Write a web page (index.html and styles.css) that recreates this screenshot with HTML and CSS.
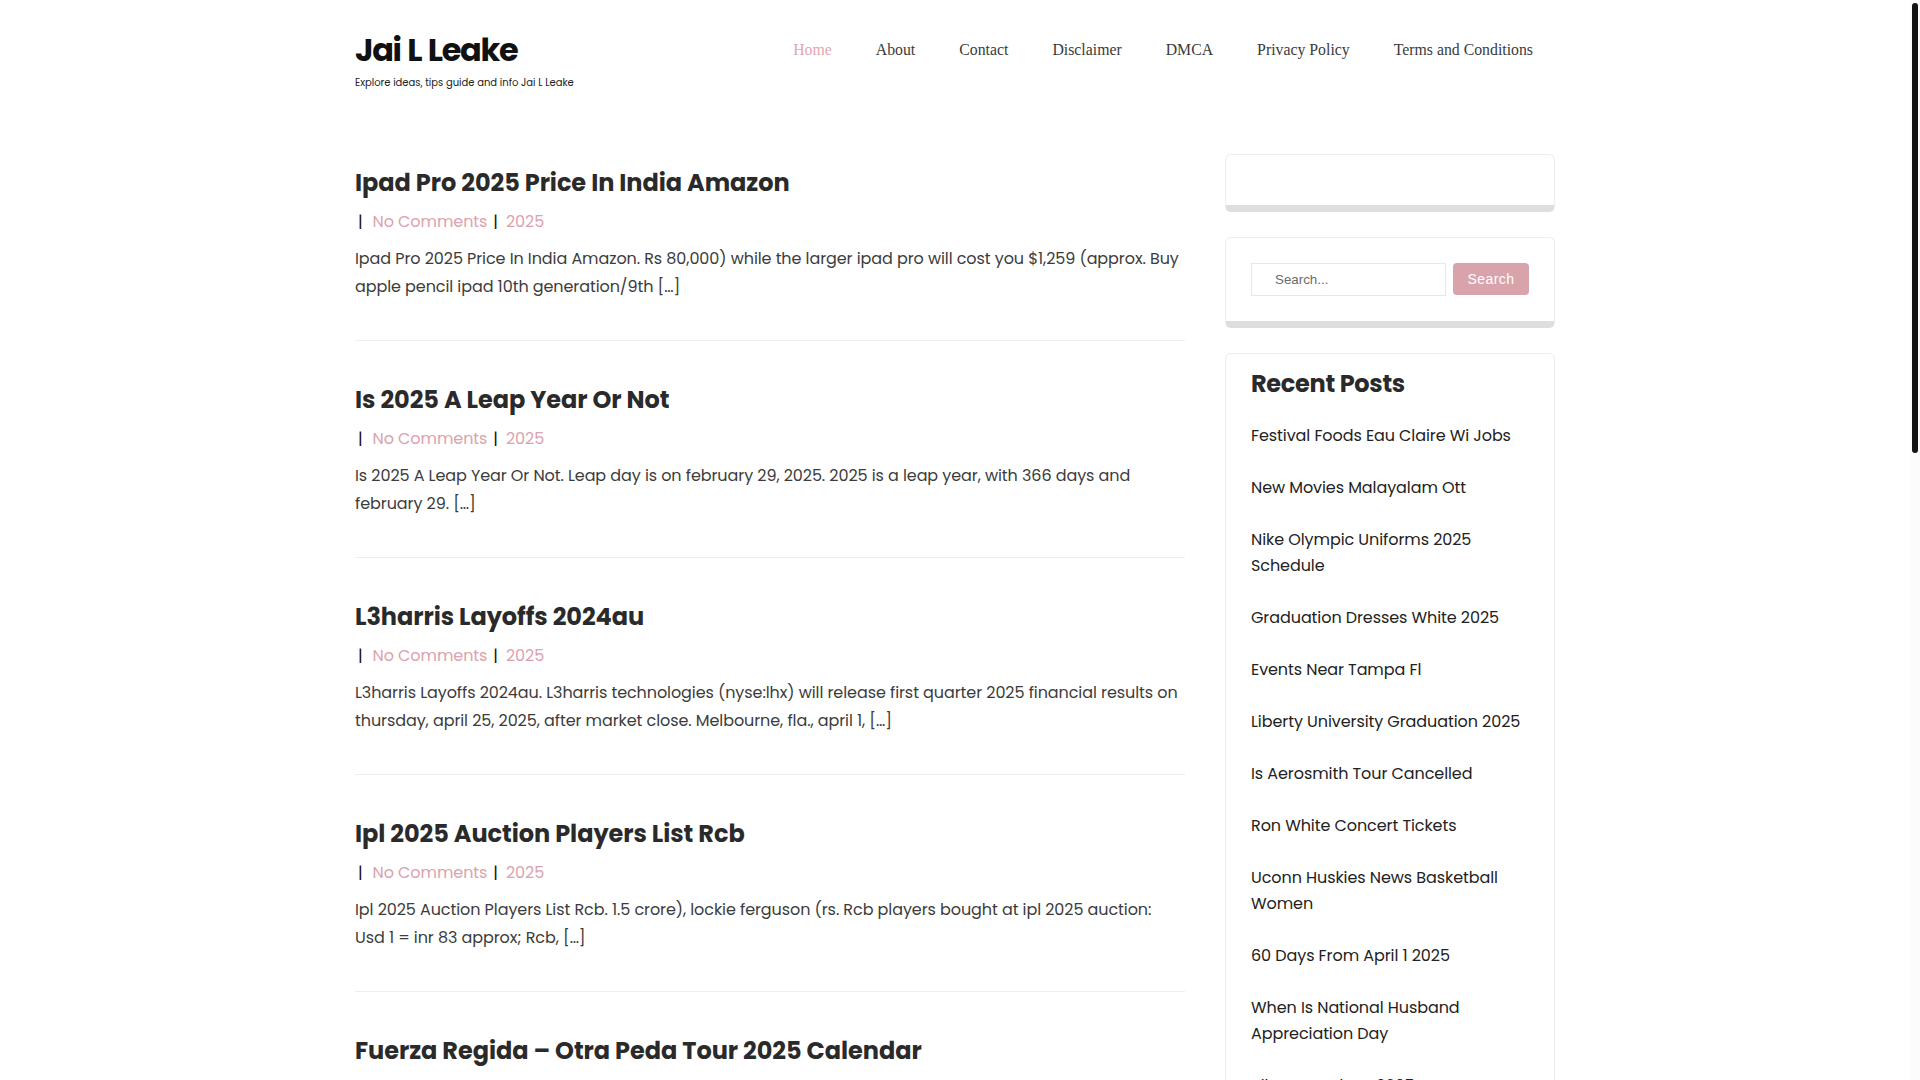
FILE: index.html
```html
<!DOCTYPE html>
<html lang="en">
<head>
<meta charset="utf-8">
<title>Jai L Leake</title>
<link rel="stylesheet" href="styles.css">
</head>
<body>
<div class="page">
  <div class="site">
    <header class="header">
      <div class="branding">
        <div class="site-title">Jai L Leake</div>
        <div class="site-desc">Explore ideas, tips guide and info Jai L Leake</div>
      </div>
      <nav class="nav">
        <a class="nav-link active" href="#">Home</a>
        <a class="nav-link" href="#">About</a>
        <a class="nav-link" href="#">Contact</a>
        <a class="nav-link" href="#">Disclaimer</a>
        <a class="nav-link" href="#">DMCA</a>
        <a class="nav-link" href="#">Privacy Policy</a>
        <a class="nav-link" href="#">Terms and Conditions</a>
      </nav>
    </header>

    <div class="main">
      <div class="posts">
        <article class="post">
          <h2 class="post-title">Ipad Pro 2025 Price In India Amazon</h2>
          <div class="meta"><span class="sep first">|</span><a href="#">No Comments</a><span class="sep">|</span><a href="#">2025</a></div>
          <p class="excerpt">Ipad Pro 2025 Price In India Amazon. Rs 80,000) while the larger ipad pro will cost you $1,259 (approx. Buy apple pencil ipad 10th generation/9th [&hellip;]</p>
        </article>
        <article class="post">
          <h2 class="post-title">Is 2025 A Leap Year Or Not</h2>
          <div class="meta"><span class="sep first">|</span><a href="#">No Comments</a><span class="sep">|</span><a href="#">2025</a></div>
          <p class="excerpt">Is 2025 A Leap Year Or Not. Leap day is on february 29, 2025. 2025 is a leap year, with 366 days and february 29. [&hellip;]</p>
        </article>
        <article class="post">
          <h2 class="post-title">L3harris Layoffs 2024au</h2>
          <div class="meta"><span class="sep first">|</span><a href="#">No Comments</a><span class="sep">|</span><a href="#">2025</a></div>
          <p class="excerpt">L3harris Layoffs 2024au. L3harris technologies (nyse:lhx) will release first quarter 2025 financial results on thursday, april 25, 2025, after market close. Melbourne, fla., april 1, [&hellip;]</p>
        </article>
        <article class="post">
          <h2 class="post-title">Ipl 2025 Auction Players List Rcb</h2>
          <div class="meta"><span class="sep first">|</span><a href="#">No Comments</a><span class="sep">|</span><a href="#">2025</a></div>
          <p class="excerpt">Ipl 2025 Auction Players List Rcb. 1.5 crore), lockie ferguson (rs. Rcb players bought at ipl 2025 auction: Usd 1 = inr 83 approx; Rcb, [&hellip;]</p>
        </article>
        <article class="post post-last">
          <h2 class="post-title">Fuerza Regida &ndash; Otra Peda Tour 2025 Calendar</h2>
        </article>
      </div>

      <aside class="sidebar">
        <section class="widget widget-empty"></section>
        <section class="widget widget-search">
          <form class="search-form" onsubmit="return false">
            <input class="search-input" type="text" placeholder="Search...">
            <button class="search-btn" type="button">Search</button>
          </form>
        </section>
        <section class="widget widget-recent">
          <h3 class="widget-title">Recent Posts</h3>
          <ul class="recent-list">
            <li><a href="#">Festival Foods Eau Claire Wi Jobs</a></li>
            <li><a href="#">New Movies Malayalam Ott</a></li>
            <li><a href="#">Nike Olympic Uniforms 2025 Schedule</a></li>
            <li><a href="#">Graduation Dresses White 2025</a></li>
            <li><a href="#">Events Near Tampa Fl</a></li>
            <li><a href="#">Liberty University Graduation 2025</a></li>
            <li><a href="#">Is Aerosmith Tour Cancelled</a></li>
            <li><a href="#">Ron White Concert Tickets</a></li>
            <li><a href="#">Uconn Huskies News Basketball Women</a></li>
            <li><a href="#">60 Days From April 1 2025</a></li>
            <li><a href="#">When Is National Husband Appreciation Day</a></li>
            <li><a href="#">Bike Lane Ideas 2025</a></li>
          </ul>
        </section>
      </aside>
    </div>
  </div>
  <div class="scrollbar"><div class="thumb"></div></div>
</div>
</body>
</html>
```

FILE: styles.css
```css
* { box-sizing: border-box; }

html, body {
  margin: 0;
  padding: 0;
  height: 100%;
  overflow: hidden;
  background: #ffffff;
}

body {
  font-family: "Poppins", "Inter", "Open Sans", sans-serif;
  color: #333333;
}

a { text-decoration: none; color: inherit; }

.page {
  display: flex;
  height: 100vh;
}

.site {
  flex: 1;
  min-width: 0;
  overflow: hidden;
}

.scrollbar {
  width: 10px;
  background: #fcfcfc;
  padding: 3px 2px 0 2px;
}

.thumb {
  width: 6px;
  height: 450px;
  background: #141414;
  border-radius: 3px;
}

/* Header */
.header {
  width: 1200px;
  margin: 0 auto;
  padding-top: 30px;
  display: flex;
  justify-content: space-between;
  align-items: flex-start;
}

.site-title {
  font-size: 32px;
  line-height: 40px;
  font-weight: 700;
  color: #111111;
  letter-spacing: -1.3px;
  word-spacing: 1px;
}

.site-desc {
  margin-top: 5px;
  font-size: 10px;
  line-height: 16px;
  color: #222222;
}

.nav {
  display: flex;
}

.nav-link {
  font-family: "Liberation Serif", "Times New Roman", serif;
  font-size: 15.8px;
  line-height: 40px;
  padding: 0 22px;
  color: #3a3a3a;
}

.nav-link.active { color: #e2a5b0; }

/* Main */
.main {
  width: 1200px;
  margin: 63px auto 0;
  display: flex;
  gap: 40px;
  align-items: flex-start;
}

.posts {
  flex: 0 0 830px;
  min-width: 0;
  padding-top: 13px;
}

.post {
  padding-bottom: 39px;
  border-bottom: 1px solid #ececf1;
  margin-bottom: 43px;
}

.post-last {
  border-bottom: none;
  padding-bottom: 0;
  margin-bottom: 0;
}

.post-title {
  margin: 0;
  font-size: 24px;
  line-height: 32px;
  font-weight: 700;
  color: #2a2a2a;
  letter-spacing: -0.05px;
}

.meta {
  margin-top: 9px;
  font-size: 16px;
  line-height: 28px;
  letter-spacing: -0.08px;
  display: flex;
  align-items: center;
}

.meta a { color: #dca2ad; }

.meta .sep {
  color: #111111;
  padding: 0 8px 0 6px;
}

.meta .sep.first { padding: 0 10px 0 3px; }

.excerpt {
  margin: 9px 0 0;
  font-size: 16px;
  line-height: 28px;
  letter-spacing: -0.08px;
  color: #3c3c3c;
}

/* Sidebar */
.sidebar {
  flex: 0 0 330px;
  min-width: 0;
  display: flex;
  flex-direction: column;
  gap: 25px;
}

.widget {
  background: #ffffff;
  border: 1px solid #ececf2;
  border-bottom: 7px solid #dedede;
  border-radius: 6px;
  padding: 25px;
}

.widget-empty { height: 58px; }

.search-form {
  display: flex;
  gap: 7px;
}

.search-input {
  flex: 1 1 0;
  width: 0;
  min-width: 0;
  height: 33px;
  border: 1px solid #e6e6ec;
  border-radius: 0;
  padding: 0 0 0 23px;
  font-family: "Liberation Sans", Arial, sans-serif;
  font-size: 13.33px;
  color: #555555;
  outline: none;
}

.search-input::placeholder { color: #6b6b6b; }

.search-btn {
  flex: 0 0 76px;
  height: 32px;
  border: none;
  border-radius: 4px;
  background: #d9a3ab;
  color: #ffffff;
  font-family: "Liberation Sans", Arial, sans-serif;
  font-size: 14px;
  letter-spacing: 0.4px;
  padding: 0;
}

.widget-recent {
  padding: 14px 25px 25px;
  border-bottom: 1px solid #ececf2;
}

.widget-title {
  margin: 0;
  font-size: 24px;
  line-height: 32px;
  font-weight: 700;
  color: #2a2a2a;
  letter-spacing: -0.3px;
}

.recent-list {
  list-style: none;
  margin: 23px 0 0;
  padding: 0;
}

.recent-list li {
  font-size: 16px;
  line-height: 26px;
  letter-spacing: -0.08px;
  color: #222222;
  margin-bottom: 26px;
}
```
